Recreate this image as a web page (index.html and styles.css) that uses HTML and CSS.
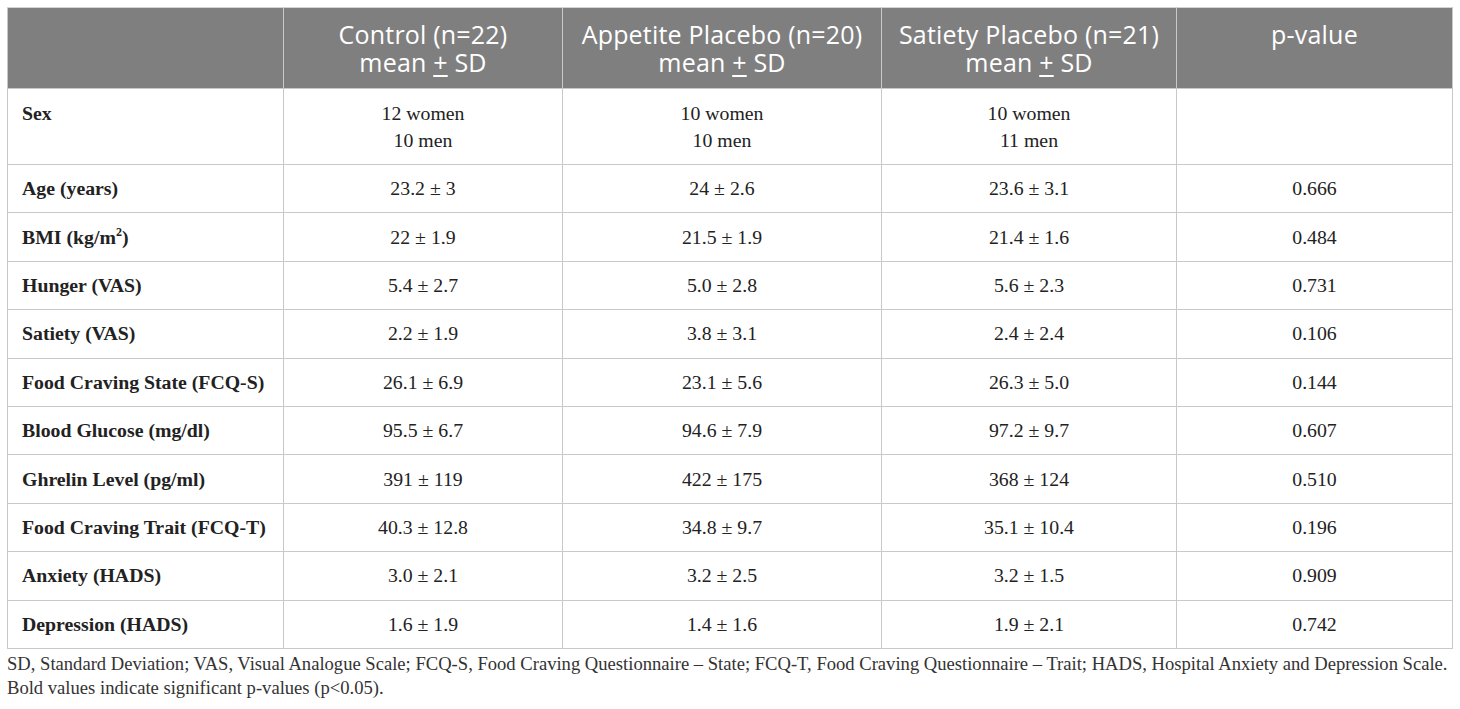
FILE: index.html
```html
<!DOCTYPE html>
<html lang="en">
<head>
    <meta charset="UTF-8">
    <title>Table 1 - Baseline characteristics</title>
    <link rel="stylesheet" href="styles.css">
</head>
<body>
    <div class="table-wrap">
        <table class="data-table">
            <colgroup>
                <col class="col-label">
                <col class="col-control">
                <col class="col-appetite">
                <col class="col-satiety">
                <col class="col-p">
            </colgroup>
            <thead>
                <tr>
                    <th></th>
                    <th>Control (n=22)<br>mean <u>+</u> SD</th>
                    <th>Appetite Placebo (n=20)<br>mean <u>+</u> SD</th>
                    <th>Satiety Placebo (n=21)<br>mean <u>+</u> SD</th>
                    <th>p-value</th>
                </tr>
            </thead>
            <tbody>
                <tr class="tall">
                    <td class="label">Sex</td>
                    <td>12 women<br>10 men</td>
                    <td>10 women<br>10 men</td>
                    <td>10 women<br>11 men</td>
                    <td></td>
                </tr>
                <tr>
                    <td class="label">Age (years)</td>
                    <td>23.2 ± 3</td>
                    <td>24 ± 2.6</td>
                    <td>23.6 ± 3.1</td>
                    <td>0.666</td>
                </tr>
                <tr>
                    <td class="label">BMI (kg/m<sup>2</sup>)</td>
                    <td>22 ± 1.9</td>
                    <td>21.5 ± 1.9</td>
                    <td>21.4 ± 1.6</td>
                    <td>0.484</td>
                </tr>
                <tr>
                    <td class="label">Hunger (VAS)</td>
                    <td>5.4 ± 2.7</td>
                    <td>5.0 ± 2.8</td>
                    <td>5.6 ± 2.3</td>
                    <td>0.731</td>
                </tr>
                <tr>
                    <td class="label">Satiety (VAS)</td>
                    <td>2.2 ± 1.9</td>
                    <td>3.8 ± 3.1</td>
                    <td>2.4 ± 2.4</td>
                    <td>0.106</td>
                </tr>
                <tr>
                    <td class="label">Food Craving State (FCQ-S)</td>
                    <td>26.1 ± 6.9</td>
                    <td>23.1 ± 5.6</td>
                    <td>26.3 ± 5.0</td>
                    <td>0.144</td>
                </tr>
                <tr>
                    <td class="label">Blood Glucose (mg/dl)</td>
                    <td>95.5 ± 6.7</td>
                    <td>94.6 ± 7.9</td>
                    <td>97.2 ± 9.7</td>
                    <td>0.607</td>
                </tr>
                <tr>
                    <td class="label">Ghrelin Level (pg/ml)</td>
                    <td>391 ± 119</td>
                    <td>422 ± 175</td>
                    <td>368 ± 124</td>
                    <td>0.510</td>
                </tr>
                <tr>
                    <td class="label">Food Craving Trait (FCQ-T)</td>
                    <td>40.3 ± 12.8</td>
                    <td>34.8 ± 9.7</td>
                    <td>35.1 ± 10.4</td>
                    <td>0.196</td>
                </tr>
                <tr>
                    <td class="label">Anxiety (HADS)</td>
                    <td>3.0 ± 2.1</td>
                    <td>3.2 ± 2.5</td>
                    <td>3.2 ± 1.5</td>
                    <td>0.909</td>
                </tr>
                <tr>
                    <td class="label">Depression (HADS)</td>
                    <td>1.6 ± 1.9</td>
                    <td>1.4 ± 1.6</td>
                    <td>1.9 ± 2.1</td>
                    <td>0.742</td>
                </tr>
            </tbody>
        </table>

        <p class="footnote">SD, Standard Deviation; VAS, Visual Analogue Scale; FCQ-S, Food Craving Questionnaire – State; FCQ-T, Food Craving Questionnaire – Trait; HADS, Hospital Anxiety and Depression Scale.<br>Bold values indicate significant p-values (p&lt;0.05).</p>
    </div>
</body>
</html>
```

FILE: styles.css
```css
* {
    margin: 0;
    padding: 0;
    box-sizing: border-box;
}

body {
    background: #ffffff;
    color: #222222;
    font-family: "Liberation Serif", "Times New Roman", serif;
}

.table-wrap {
    padding: 7px 8px 0 7px;
}

.data-table {
    width: 1445px;
    border-collapse: collapse;
    table-layout: fixed;
}

.col-label { width: 276px; }
.col-control { width: 279px; }
.col-appetite { width: 319px; }
.col-satiety { width: 295px; }
.col-p { width: 276px; }

.data-table th {
    background: #7f7f7f;
    color: #ffffff;
    font-family: "Open Sans", "Noto Sans", sans-serif;
    font-weight: 400;
    font-size: 25px;
    line-height: 28px;
    height: 81px;
    padding: 12px 4px 10px;
    text-align: center;
    vertical-align: top;
    border: 1px solid #c9c9c9;
    border-top-color: #d4d4d4;
    letter-spacing: 0.2px;
}

.data-table th u {
    text-underline-offset: 3px;
}

.data-table td {
    height: 48.4px;
    border: 1px solid #c9c9c9;
    text-align: center;
    vertical-align: middle;
    font-size: 19.8px;
    line-height: 27px;
    padding: 0 10px;
}

.data-table tr.tall td {
    height: 76px;
    vertical-align: top;
    padding-top: 11px;
}

.data-table td.label {
    text-align: left;
    font-weight: 700;
    padding-left: 14px;
}

.data-table sup {
    font-size: 12px;
    line-height: 0;
}

.footnote {
    margin-top: 3px;
    font-size: 18.6px;
    line-height: 24px;
    color: #333333;
    white-space: nowrap;
}
```
